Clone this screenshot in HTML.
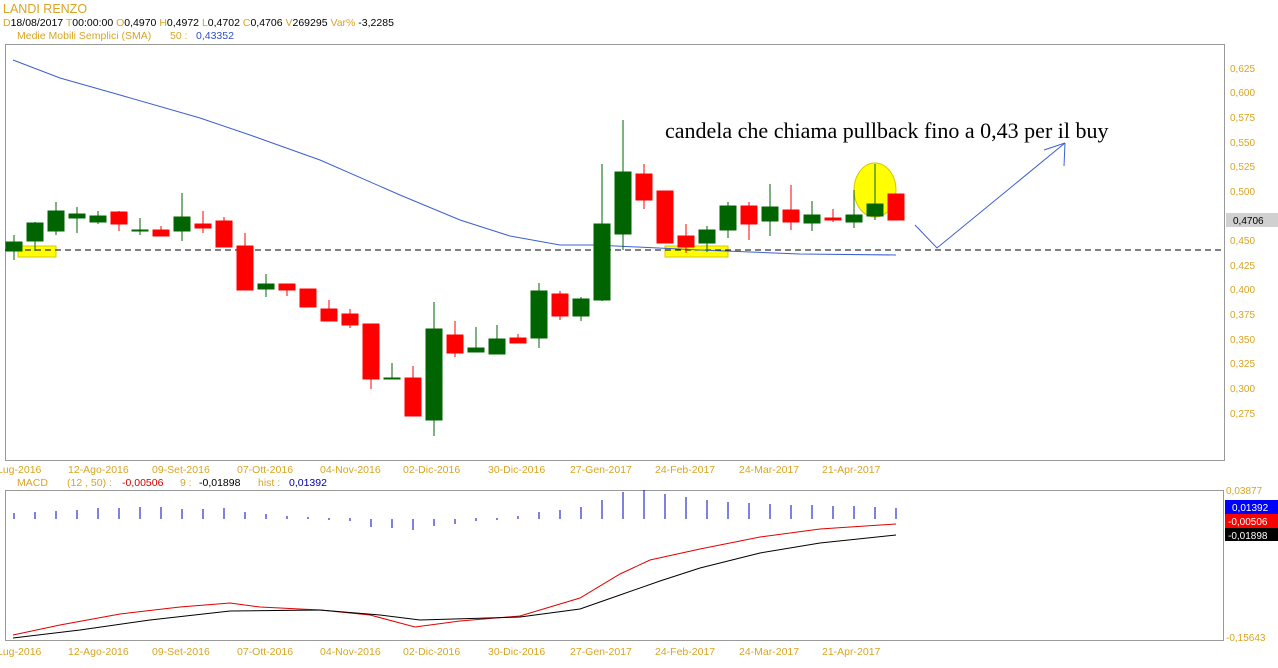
<!DOCTYPE html>
<html><head><meta charset="utf-8"><style>
body{margin:0;background:#fff;width:1278px;height:668px;overflow:hidden;font-family:"Liberation Sans",Arial,sans-serif}
svg{display:block}
</style></head><body>
<svg width="1278" height="668" xmlns="http://www.w3.org/2000/svg" font-family="Liberation Sans, Arial, sans-serif">
<rect width="1278" height="668" fill="#fff"/>
<text x="3" y="13" font-size="12.5" fill="#d9a520">LANDI RENZO</text>
<text x="3" y="26" font-size="10.5" fill="#d9a520">D<tspan fill="#000">18/08/2017 </tspan> T<tspan fill="#000">00:00:00 </tspan> O<tspan fill="#000">0,4970 </tspan> H<tspan fill="#000">0,4972 </tspan> L<tspan fill="#000">0,4702 </tspan> C<tspan fill="#000">0,4706 </tspan> V<tspan fill="#000">269295 </tspan> Var% <tspan fill="#000">-3,2285</tspan></text>
<text x="17" y="39" font-size="10.5" fill="#d9a520">Medie Mobili Semplici (SMA)<tspan x="170">50 :</tspan><tspan x="196" fill="#3050c0">0,43352</tspan></text>
<rect x="5.5" y="44.5" width="1219" height="416" fill="none" stroke="#999"/>
<g font-size="10" fill="#d9a520">
<text x="1230" y="72">0,625</text><text x="1230" y="96">0,600</text><text x="1230" y="121">0,575</text><text x="1230" y="146">0,550</text><text x="1230" y="170">0,525</text><text x="1230" y="195">0,500</text><text x="1230" y="244">0,450</text><text x="1230" y="269">0,425</text><text x="1230" y="293">0,400</text><text x="1230" y="318">0,375</text><text x="1230" y="343">0,350</text><text x="1230" y="367">0,325</text><text x="1230" y="392">0,300</text><text x="1230" y="417">0,275</text>
</g>
<rect x="1226" y="213" width="52" height="14" fill="#d0d0d0"/>
<text x="1233" y="224" font-size="10" fill="#000">0,4706</text>
<rect x="18" y="246" width="38" height="11" fill="#ffff00" stroke="#d8c800"/>
<rect x="665" y="246" width="63" height="11" fill="#ffff00" stroke="#d8c800"/>
<ellipse cx="875" cy="190" rx="21" ry="27" fill="#ffff00" stroke="#d8c800"/>
<line x1="5" y1="250" x2="1225" y2="250" stroke="#000" stroke-dasharray="6,4"/>
<polyline fill="none" stroke="#3d5fd0" stroke-width="1" points="13,60 60,78 120,95 200,118 250,135 320,160 400,195 460,220 510,236 560,245 595,245 700,250 800,254 896,255"/>
<g stroke-width="1">
<g fill="#006400" stroke="#006400">
<line x1="14" y1="235" x2="14" y2="260"/><rect x="6" y="242" width="16" height="9"/>
<line x1="35" y1="222" x2="35" y2="251"/><rect x="27" y="223" width="16" height="18"/>
<line x1="56" y1="202" x2="56" y2="235"/><rect x="48" y="211" width="16" height="20"/>
<line x1="77" y1="207" x2="77" y2="233"/><rect x="69" y="214" width="16" height="4"/>
<line x1="98" y1="211" x2="98" y2="224"/><rect x="90" y="216" width="16" height="6"/>
<line x1="140" y1="218" x2="140" y2="235"/><rect x="132" y="230" width="16" height="1"/>
<line x1="182" y1="193" x2="182" y2="241"/><rect x="174" y="217" width="16" height="14"/>
<line x1="266" y1="274" x2="266" y2="297"/><rect x="258" y="284" width="16" height="5"/>
<line x1="392" y1="363" x2="392" y2="379"/><rect x="384" y="378" width="16" height="1"/>
<line x1="434" y1="302" x2="434" y2="436"/><rect x="426" y="329" width="16" height="91"/>
<line x1="476" y1="327" x2="476" y2="352"/><rect x="468" y="348" width="16" height="4"/>
<line x1="497" y1="325" x2="497" y2="354"/><rect x="489" y="339" width="16" height="15"/>
<line x1="539" y1="283" x2="539" y2="348"/><rect x="531" y="291" width="16" height="47"/>
<line x1="581" y1="297" x2="581" y2="321"/><rect x="573" y="299" width="16" height="17"/>
<line x1="602" y1="164" x2="602" y2="301"/><rect x="594" y="224" width="16" height="76"/>
<line x1="623" y1="120" x2="623" y2="250"/><rect x="615" y="172" width="16" height="62"/>
<line x1="707" y1="226" x2="707" y2="252"/><rect x="699" y="230" width="16" height="13"/>
<line x1="728" y1="202" x2="728" y2="238"/><rect x="720" y="206" width="16" height="24"/>
<line x1="770" y1="184" x2="770" y2="236"/><rect x="762" y="207" width="16" height="14"/>
<line x1="812" y1="201" x2="812" y2="231"/><rect x="804" y="215" width="16" height="8"/>
<line x1="854" y1="190" x2="854" y2="228"/><rect x="846" y="215" width="16" height="7"/>
<line x1="875" y1="164" x2="875" y2="220"/><rect x="867" y="204" width="16" height="12"/>
</g>
<g fill="#ff0000" stroke="#ff0000">
<line x1="119" y1="211" x2="119" y2="231"/><rect x="111" y="212" width="16" height="12"/>
<line x1="161" y1="226" x2="161" y2="236"/><rect x="153" y="230" width="16" height="6"/>
<line x1="203" y1="211" x2="203" y2="233"/><rect x="195" y="224" width="16" height="4"/>
<line x1="224" y1="217" x2="224" y2="247"/><rect x="216" y="221" width="16" height="26"/>
<line x1="245" y1="233" x2="245" y2="290"/><rect x="237" y="246" width="16" height="44"/>
<line x1="287" y1="284" x2="287" y2="296"/><rect x="279" y="284" width="16" height="6"/>
<rect x="300" y="289" width="16" height="18"/>
<line x1="329" y1="300" x2="329" y2="321"/><rect x="321" y="309" width="16" height="12"/>
<line x1="350" y1="309" x2="350" y2="328"/><rect x="342" y="314" width="16" height="11"/>
<line x1="371" y1="324" x2="371" y2="389"/><rect x="363" y="324" width="16" height="55"/>
<line x1="413" y1="366" x2="413" y2="416"/><rect x="405" y="378" width="16" height="38"/>
<line x1="455" y1="321" x2="455" y2="357"/><rect x="447" y="335" width="16" height="18"/>
<line x1="518" y1="334" x2="518" y2="343"/><rect x="510" y="338" width="16" height="5"/>
<line x1="560" y1="291" x2="560" y2="320"/><rect x="552" y="294" width="16" height="22"/>
<line x1="644" y1="164" x2="644" y2="209"/><rect x="636" y="174" width="16" height="26"/>
<rect x="657" y="191" width="16" height="52"/>
<line x1="686" y1="224" x2="686" y2="253"/><rect x="678" y="236" width="16" height="11"/>
<line x1="749" y1="202" x2="749" y2="240"/><rect x="741" y="206" width="16" height="18"/>
<line x1="791" y1="185" x2="791" y2="230"/><rect x="783" y="210" width="16" height="12"/>
<line x1="833" y1="209" x2="833" y2="222"/><rect x="825" y="218" width="16" height="2"/>
<rect x="888" y="194" width="16" height="26"/>
</g>
</g>
<polyline fill="none" stroke="#3d5fd0" points="915,225 937,248 1065,143"/>
<line x1="1065" y1="143" x2="1064" y2="166" stroke="#3d5fd0"/>
<line x1="1065" y1="143" x2="1044" y2="150" stroke="#3d5fd0"/>
<text x="665" y="138" font-family="Liberation Serif, serif" font-size="22" fill="#000">candela che chiama pullback fino a 0,43 per il buy</text>
<g font-size="10.5" fill="#d9a520">
<text x="-3" y="473">Lug-2016</text><text x="68" y="473">12-Ago-2016</text><text x="152" y="473">09-Set-2016</text><text x="237" y="473">07-Ott-2016</text><text x="320" y="473">04-Nov-2016</text><text x="403" y="473">02-Dic-2016</text><text x="488" y="473">30-Dic-2016</text><text x="570" y="473">27-Gen-2017</text><text x="655" y="473">24-Feb-2017</text><text x="739" y="473">24-Mar-2017</text><text x="822" y="473">21-Apr-2017</text>
<text x="-3" y="655">Lug-2016</text><text x="68" y="655">12-Ago-2016</text><text x="152" y="655">09-Set-2016</text><text x="237" y="655">07-Ott-2016</text><text x="320" y="655">04-Nov-2016</text><text x="403" y="655">02-Dic-2016</text><text x="488" y="655">30-Dic-2016</text><text x="570" y="655">27-Gen-2017</text><text x="655" y="655">24-Feb-2017</text><text x="739" y="655">24-Mar-2017</text><text x="822" y="655">21-Apr-2017</text>
</g>
<text x="17" y="486" font-size="10.5" fill="#d9a520">MACD<tspan x="67">(12 , 50) :</tspan><tspan x="122" fill="#d00000">-0,00506</tspan><tspan x="180">9 :</tspan><tspan x="199" fill="#000">-0,01898</tspan><tspan x="258">hist :</tspan><tspan x="289" fill="#0000a0">0,01392</tspan></text>
<rect x="5.5" y="490.5" width="1218" height="150" fill="none" stroke="#999"/>
<text x="1226" y="494" font-size="10" fill="#d9a520">0,03877</text>
<rect x="1225" y="500" width="53" height="14" fill="#0000ff"/><text x="1232" y="511" font-size="10" fill="#fff">0,01392</text>
<rect x="1225" y="514" width="53" height="14" fill="#ff0000"/><text x="1228" y="525" font-size="10" fill="#fff">-0,00506</text>
<rect x="1225" y="528" width="53" height="13" fill="#000"/><text x="1228" y="539" font-size="10" fill="#fff">-0,01898</text>
<text x="1226" y="641" font-size="10" fill="#d9a520">-0,15643</text>
<g stroke="#0000c0">
<line x1="14" y1="513" x2="14" y2="519"/><line x1="35" y1="512" x2="35" y2="519"/><line x1="56" y1="511" x2="56" y2="519"/><line x1="77" y1="510" x2="77" y2="519"/><line x1="98" y1="508" x2="98" y2="519"/><line x1="119" y1="508" x2="119" y2="519"/><line x1="140" y1="507" x2="140" y2="519"/><line x1="161" y1="507" x2="161" y2="519"/><line x1="182" y1="509" x2="182" y2="519"/><line x1="203" y1="509" x2="203" y2="519"/><line x1="224" y1="508" x2="224" y2="519"/><line x1="245" y1="512" x2="245" y2="519"/><line x1="266" y1="514" x2="266" y2="519"/><line x1="287" y1="516" x2="287" y2="519"/><line x1="308" y1="517" x2="308" y2="519"/><line x1="329" y1="518" x2="329" y2="520"/><line x1="350" y1="518" x2="350" y2="521"/><line x1="371" y1="519" x2="371" y2="527"/><line x1="392" y1="519" x2="392" y2="528"/><line x1="413" y1="519" x2="413" y2="530"/><line x1="434" y1="519" x2="434" y2="526"/><line x1="455" y1="519" x2="455" y2="524"/><line x1="476" y1="518" x2="476" y2="521"/><line x1="497" y1="518" x2="497" y2="520"/><line x1="518" y1="516" x2="518" y2="519"/><line x1="539" y1="512" x2="539" y2="519"/><line x1="560" y1="510" x2="560" y2="519"/><line x1="581" y1="507" x2="581" y2="519"/><line x1="602" y1="500" x2="602" y2="519"/><line x1="623" y1="492" x2="623" y2="519"/><line x1="644" y1="490" x2="644" y2="519"/><line x1="665" y1="494" x2="665" y2="519"/><line x1="686" y1="497" x2="686" y2="519"/><line x1="707" y1="500" x2="707" y2="519"/><line x1="728" y1="502" x2="728" y2="519"/><line x1="749" y1="503" x2="749" y2="519"/><line x1="770" y1="504" x2="770" y2="519"/><line x1="791" y1="505" x2="791" y2="519"/><line x1="812" y1="505" x2="812" y2="519"/><line x1="833" y1="506" x2="833" y2="519"/><line x1="854" y1="506" x2="854" y2="519"/><line x1="875" y1="507" x2="875" y2="519"/><line x1="896" y1="508" x2="896" y2="519"/>
</g>
<polyline fill="none" stroke="#e00000" points="13,635 60,625 120,614 180,607 230,603 260,607 320,610 370,615 415,627 460,621 520,616 580,598 620,574 650,560 700,549 760,537 820,529 896,524"/>
<polyline fill="none" stroke="#000" points="13,638 80,630 150,620 230,611 320,610 380,615 420,620 520,617 580,609 620,595 660,581 700,568 760,553 820,543 896,535"/>
</svg>
</body></html>
